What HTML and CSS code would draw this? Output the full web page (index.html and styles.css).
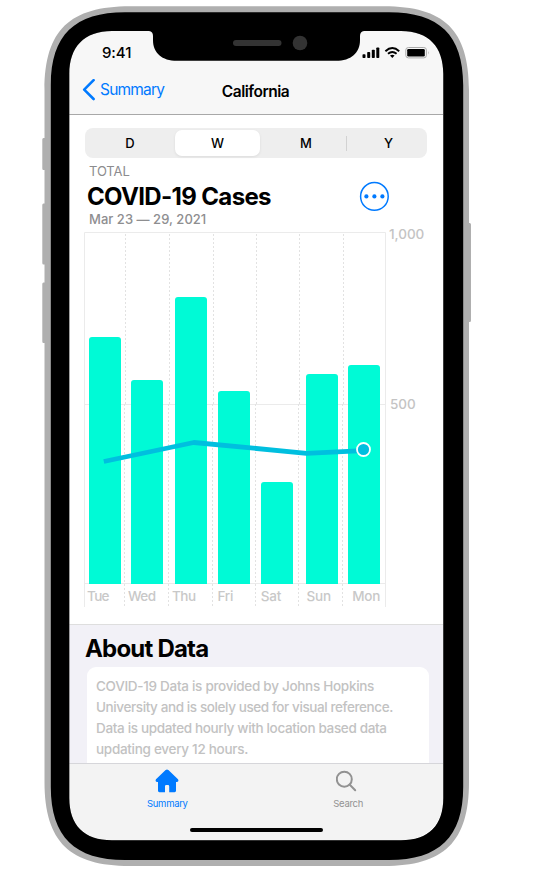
FILE: index.html
```html
<!DOCTYPE html>
<html lang="en">
<head>
<meta charset="utf-8">
<title>COVID-19 Cases</title>
<link rel="stylesheet" href="styles.css">
</head>
<body>
<div class="phone">
  <div class="screen">
    <header class="top">
      <div class="status">
        <span class="time">9:41</span>
        <svg class="status-icons" width="68" height="14" viewBox="0 0 68 14">
          <rect x="0.5" y="8.2" width="3" height="3.8" rx=".8"/>
          <rect x="5.2" y="6" width="3" height="6" rx=".8"/>
          <rect x="9.8" y="3.8" width="3" height="8.2" rx=".8"/>
          <rect x="14.3" y="1.5" width="3" height="10.5" rx=".8"/>
          <g class="wifi">
            <path d="M23.4 5.2Q30.3-1 37.2 5.2"/>
            <path d="M26 7.8Q30.3 4 34.6 7.8"/>
          </g>
          <path d="M28 9.6Q30.3 8 32.6 9.6L30.3 12Z"/>
          <rect class="battery" x="43.8" y="1.5" width="20.6" height="10.4" rx="2.6"/>
          <rect x="45.2" y="3" width="17.6" height="7.5" rx="1.3"/>
          <path class="battery-cap" d="M66 5Q67.4 6.8 66 8.6Z"/>
        </svg>
      </div>
      <nav class="nav">
        <a class="back"><svg width="13" height="22" viewBox="0 0 13 22"><path d="M11.6 1.2L2.2 10.7L11.6 20"/></svg><span>Summary</span></a>
        <span class="nav-title">California</span>
        <span></span>
      </nav>
    </header>

    <main class="content">
      <div class="segments">
        <span>D</span><span class="selected">W</span><span class="m">M</span><i class="divider"></i><span class="y">Y</span>
      </div>
      <div class="summary">
        <div class="summary-text">
          <div class="eyebrow">TOTAL</div>
          <h1>COVID-19 Cases</h1>
          <div class="dates">Mar 23 — 29, 2021</div>
        </div>
        <svg class="more" width="30" height="30" viewBox="0 0 30 30">
          <circle class="ring" cx="15.4" cy="15.4" r="13.8"/>
          <circle cx="7.4" cy="15.4" r="2.1"/><circle cx="15.4" cy="15.4" r="2.1"/><circle cx="23.4" cy="15.4" r="2.1"/>
        </svg>
      </div>
      <svg class="chart" width="374" height="384" viewBox="69 229 374 384">
        <path class="grid" d="M84.5 607V232.5H385.5V607M84.5 404.5H385.5M84.5 583.5H385.5"/>
        <path class="dash" d="M125.5 234V404M169.5 234V404M213.5 234V404M256.5 234V404M299.5 234V404M343.5 234V404M124.5 404V607M168.5 404V607M212.5 404V607M255.5 404V607M298.5 404V607M342.5 404V607"/>
        <g class="bars">
          <path d="M89 584V340q0-3 3-3h26q3 0 3 3V584Z"/>
          <path d="M131 584V383q0-3 3-3h26q3 0 3 3V584Z"/>
          <path d="M175 584V300q0-3 3-3h26q3 0 3 3V584Z"/>
          <path d="M218 584V394q0-3 3-3h26q3 0 3 3V584Z"/>
          <path d="M261 584V485q0-3 3-3h26q3 0 3 3V584Z"/>
          <path d="M306 584V377q0-3 3-3h26q3 0 3 3V584Z"/>
          <path d="M348 584V368q0-3 3-3h26q3 0 3 3V584Z"/>
        </g>
        <path class="trend" d="M103.8 461.5L193.8 442.5L306.5 453.3L363 450.7"/>
        <circle class="dot" cx="363.5" cy="449.5" r="6.5"/>
        <g class="axis">
          <text x="389" y="239">1,000</text>
          <text x="390" y="409">500</text>
        </g>
        <g class="days">
          <text x="87" y="601" textLength="22.5">Tue</text>
          <text x="128" y="601" textLength="28">Wed</text>
          <text x="172" y="601" textLength="24">Thu</text>
          <text x="217.4" y="601" textLength="16">Fri</text>
          <text x="260.8" y="601" textLength="20.5">Sat</text>
          <text x="306.6" y="601" textLength="24.5">Sun</text>
          <text x="352.3" y="601" textLength="28">Mon</text>
        </g>
      </svg>
    </main>

    <section class="about">
      <h2>About Data</h2>
      <div class="card">
        <div>COVID-19 Data is provided by Johns Hopkins</div>
        <div class="wide">University and is solely used for visual reference.</div>
        <div class="mid">Data is updated hourly with location based data</div>
        <div>updating every 12 hours.</div>
      </div>
    </section>

    <footer class="tabs">
      <div class="tab-row">
        <a class="tab active">
          <svg width="24" height="24" viewBox="0 0 24 24"><path d="M10.6 1Q12 0 13.4 1L23 10.2Q24.2 12.4 22 13H21V21.8Q21 23.2 19.6 23.2H14.2V17.2Q14.2 16 13 16H11.2Q10 16 10 17.2V23.2H4.4Q3 23.2 3 21.8V13H2Q-.2 12.4 1 10.2Z"/></svg>
          <span>Summary</span>
        </a>
        <a class="tab">
          <svg width="24" height="24" viewBox="0 0 24 24"><circle cx="8.3" cy="10.2" r="7.5"/><path d="M13.8 15.8L19.2 21.2"/></svg>
          <span>Search</span>
        </a>
      </div>
      <div class="home-bar"></div>
    </footer>
  </div>
  <svg class="frame" width="540" height="880" viewBox="0 0 540 880">
    <path class="side" d="M46 138H43.5Q42.3 138 42.3 139.5V168.5Q42.3 170 43.5 170H46ZM46 203.5H43.5Q42.3 203.5 42.3 205V263Q42.3 264.5 43.5 264.5H46ZM46 282.5H43.5Q42.3 282.5 42.3 284V341.5Q42.3 343 43.5 343H46ZM467 223H469.7Q471 223 471 224.5V320.5Q471 322 469.7 322H467Z"/>
    <path class="metal" fill-rule="evenodd" d="M44.5 90C44.5 30 70 6.3 130 6.3H384C444 6.3 469 30 469 90V782C469 842 444 866 384 866H130C70 866 44.5 842 44.5 782ZM69.3 74V798C69.3 825 84 840.3 112 840.3H401C429 840.3 443.3 825 443.3 798V74C443.3 47 429 31 401 31H112C84 31 69.3 47 69.3 74Z"/>
    <path class="bezel" fill-rule="evenodd" d="M50.8 85C50.8 35 75 12.3 125 12.3H389C439 12.3 463.2 35 463.2 85V787C463.2 837 439 860 389 860H125C75 860 50.8 837 50.8 787ZM69.3 74V798C69.3 825 84 840.3 112 840.3H401C429 840.3 443.3 825 443.3 798V74C443.3 47 429 31 401 31H364Q360 31.5 360 36V40C360 53 351 60.8 336 60.8H177C162 60.8 153 53 153 40V36Q153 31.5 149 31H112C84 31 69.3 47 69.3 74Z"/>
    <rect class="sensor" x="233" y="40" width="48.5" height="6" rx="3"/>
    <circle class="sensor" cx="300" cy="43" r="7.3"/>
  </svg>
</div>
</body>
</html>
```
FILE: styles.css
```css
* { box-sizing: border-box; }
body {
  margin: 0;
  background: #fff;
  font-family: Inter, "Liberation Sans", sans-serif;
  color: #000;
}
.phone {
  position: relative;
  width: 540px;
  height: 880px;
  padding: 31px 0 0 69px;
}
.screen {
  width: 374px;
  height: 809px;
  display: flex;
  flex-direction: column;
  background: #fff;
  overflow: hidden;
  border-radius: 38px;
  white-space: nowrap;
}
.frame { position: absolute; left: 0; top: 0; pointer-events: none; }
.side, .metal { fill: #afafaf; }
.bezel { fill: #000; }
.sensor { fill: #333; }

.top {
  flex: none;
  height: 84px;
  background: #f7f7f7;
  border-bottom: 1px solid #a8a8a8;
}
.status {
  height: 44px;
  padding: 11px 13px 0 33px;
  display: flex;
  justify-content: space-between;
}
.time { font-size: 15px; line-height: 22px; font-weight: 550; letter-spacing: -.1px; }
.status-icons { margin-top: 4px; }
.wifi { fill: none; stroke: #000; stroke-width: 1.9; }
.battery { fill: none; stroke: #aaa; stroke-width: 1; }
.battery-cap { fill: #aaa; }
.nav {
  display: grid;
  grid-template-columns: 1fr auto 1fr;
  padding-left: 13px;
  padding-right: 14px;
}
.back {
  display: flex;
  gap: 5px;
  color: #007aff;
  font-size: 15.5px;
  line-height: 30px;
  letter-spacing: -.8px;
}
.back svg { margin-top: 4px; }
.back path { fill: none; stroke: #007aff; stroke-width: 2.6; stroke-linecap: round; stroke-linejoin: round; }
.nav-title { font-size: 15.5px; line-height: 33px; font-weight: 600; letter-spacing: -.5px; }

.content { flex: none; height: 510px; border-bottom: 1px solid #dedede; padding-top: 13px; }
.segments {
  display: grid;
  grid-template-columns: 90px 85px 86px 1px 80px;
  align-items: center;
  width: 342px;
  height: 30px;
  margin-left: 16px;
  background: #eee;
  border-radius: 8px;
  font-size: 13px;
  font-weight: 500;
  text-align: center;
  line-height: 30px;
}
.segments .selected {
  line-height: 26px;
  background: #fff;
  border-radius: 7px;
  box-shadow: 0 1px 3px rgba(0,0,0,.08);
}
.segments .m { padding-left: 6px; }
.segments .y { padding-left: 3px; }
.divider { width: 1px; height: 15px; background: #d2d2d2; }
.summary { display: flex; justify-content: space-between; height: 71px; padding: 4px 54px 0 18px; }
.eyebrow { margin-left: 2px; font-size: 13px; line-height: 18px; letter-spacing: -.1px; color: #8c8c8e; }
h1, h2 { margin: 0; font-size: 24px; font-weight: 650; letter-spacing: -.65px; }
h1 { line-height: 33px; margin-bottom: -1px; }
.dates { margin-left: 2px; font-size: 13px; line-height: 15px; font-weight: 500; letter-spacing: .03px; color: #8e8e90; }
.more { margin-top: 19px; fill: #007aff; }
.ring { fill: none; stroke: #007aff; stroke-width: 1.5; }
.chart { display: block; overflow: visible; }
.grid { fill: none; stroke: #ebebeb; }
.dash { fill: none; stroke: #e2e2e2; stroke-dasharray: 2 2; }
.bars { fill: #00fad6; }
.trend { fill: none; stroke: #00bfdf; stroke-width: 4.8; stroke-linejoin: round; }
.dot { fill: #00bfdf; stroke: #fff; stroke-width: 1.8; }
.axis { font-size: 13.5px; font-weight: 500; letter-spacing: -.05px; fill: #c4c4c4; }
.days { font-size: 13.5px; font-weight: 500; fill: #c8c8c8; }

.about { flex: 1; min-height: 0; padding: 8px 14px 0 16px; background: #f2f1f7; overflow: hidden; }
h2 { line-height: 32px; letter-spacing: -.8px; }
.card {
  height: 120px;
  margin: 2px 0 0 2px;
  padding: 9px;
  background: #fff;
  border-radius: 9px;
  color: #c2c2c2;
  font-size: 13.5px;
  font-weight: 550;
  line-height: 21px;
  letter-spacing: -.29px;
}
.card .wide { letter-spacing: -.4px; }
.card .mid { letter-spacing: -.34px; }
.tabs { flex: none; height: 77px; background: #f3f3f3; border-top: 1px solid #d6d6da; }
.tab-row { display: flex; justify-content: space-between; padding: 5px 80px 0 78px; height: 64px; }
.tab { display: flex; flex-direction: column; align-items: center; color: #929292; font-size: 9.5px; line-height: 14px; letter-spacing: -.3px; }
.tab svg { margin-bottom: 4px; fill: none; stroke: #929292; stroke-width: 2; stroke-linecap: round; }
.tab.active { color: #007aff; }
.tab.active svg { fill: #007aff; stroke: none; }
.home-bar { width: 133px; height: 4px; margin-left: 121px; background: #000; border-radius: 2px; }
```
